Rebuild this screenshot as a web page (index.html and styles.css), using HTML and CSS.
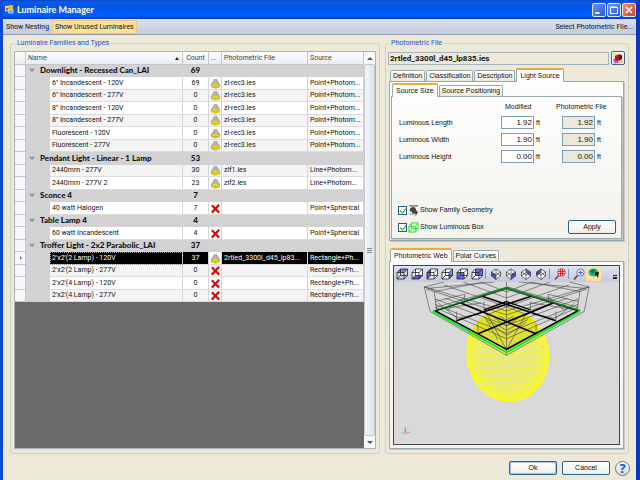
FILE: index.html
```
<!DOCTYPE html>
<html lang="en">
<head>
    <meta charset="UTF-8">
    <meta name="viewport" content="width=device-width, initial-scale=1.0">
    <title>Luminaire Manager</title>
    <link rel="stylesheet" href="styles.css">
</head>
<body>
    <!-- shared shapes -->
    <svg class="defs" width="0" height="0">
        <symbol id="cube" viewBox="0 0 12 12">
            <path d="M1 4.5h7v6.500h-7zM4.500 1h7v6.500h-7zM1 4.500l3.500-3.500M8 4.500l3.500-3.500M8 11l3.500-3.500M1 11l3.500-3.500" fill="none" stroke="#222" stroke-width=".8"/>
        </symbol>
        <symbol id="diamond" viewBox="0 0 12 12">
            <path d="M6 1l4.500 3v4l-4.500 3.500-4.500-3.500v-4zM1.500 4l4.500 3 4.500-3M6 7v4.500M6 1v3M1.500 8l4.500-3.500 4.500 3.500" fill="none" stroke="#333" stroke-width=".7"/>
        </symbol>
        <symbol id="web" viewBox="0 0 12 12">
            <path d="M5 1h2l4.500 7-1 2.500-4.500 1-4.500-1-1-2.500z" fill="#b4b4a8"/>
            <path d="M1.500 8.500l2.500-2.500 4 .5 3 2-1 2-4 1-4-1z" fill="#e3d51c"/>
            <path d="M5 1l-3.500 7M7 1l3.500 7M3 9l3 1 3-1" fill="none" stroke="#88887c" stroke-width=".5"/>
        </symbol>
        <symbol id="cross" viewBox="0 0 12 12">
            <path d="M2 2.500l8 8M10 2l-8 8.500" stroke="#c8100c" stroke-width="2.400"/>
        </symbol>
        <symbol id="chevron" viewBox="0 0 6 6">
            <path d="M1 1.500l2 2.500 2-2.500" fill="none" stroke="#777" stroke-width="1.200"/>
        </symbol>
    </svg>

    <header class="titlebar">
        <svg class="app-icon" viewBox="0 0 10 10">
            <path d="M0 1h6v6h-6z" fill="#e8ecf5"/>
            <path d="M4 0h5v5h-5z" fill="#f2b21c"/>
            <path d="M1 3h3v3h-3z" fill="#d8452a"/>
            <path d="M4 5h5v4h-5z" fill="#7fa4e6" stroke="#fff" stroke-width=".6"/>
        </svg>
        <h1>Luminaire Manager</h1>
        <button class="win-btn" aria-label="Minimize"><svg viewBox="0 0 12 12"><path d="M2.500 9h4" stroke="#fff" stroke-width="2"/></svg></button>
        <button class="win-btn" aria-label="Maximize"><svg viewBox="0 0 12 12"><path d="M2.500 3.500h7v6h-7zM2.500 3h7" fill="none" stroke="#fff"/></svg></button>
        <button class="win-btn close" aria-label="Close"><svg viewBox="0 0 12 12"><path d="M3 3l6 6M9 3l-6 6" stroke="#fff" stroke-width="1.500"/></svg></button>
    </header>

    <nav class="menubar">
        <button class="menu-btn">Show Nesting</button>
        <button class="menu-btn pressed">Show Unused Luminaires</button>
        <button class="menu-btn right">Select Photometric File...</button>
    </nav>

    <main>
        <fieldset class="group families">
            <legend>Luminaire Families and Types</legend>
            <div class="grid-view">
                <div class="grid-body">
                    <table>
                        <colgroup>
                            <col class="c-head"><col class="c-indent"><col><col class="c-count"><col class="c-icon"><col class="c-file"><col class="c-source">
                        </colgroup>
                        <thead>
                            <tr>
                                <th></th>
                                <th colspan="2">Name <span class="sort"></span></th>
                                <th class="num">Count</th>
                                <th>...</th>
                                <th>Photometric File</th>
                                <th>Source</th>
                            </tr>
                        </thead>
                        <tbody>
                            <tr class="family"><th></th><td colspan="2"><svg class="chev"><use href="#chevron"/></svg>Downlight - Recessed Can_LAI</td><td class="num">69</td><td colspan="3"></td></tr>
                            <tr><th></th><td class="indent"></td><td>6" Incandescent - 120V</td><td class="num">69</td><td class="ico"><svg><use href="#web"/></svg></td><td>zl-rec3.ies</td><td>Point+Photom...</td></tr>
                            <tr><th></th><td class="indent"></td><td>6" Incandescent - 277V</td><td class="num">0</td><td class="ico"><svg><use href="#web"/></svg></td><td>zl-rec3.ies</td><td>Point+Photom...</td></tr>
                            <tr><th></th><td class="indent"></td><td>8" Incandescent - 120V</td><td class="num">0</td><td class="ico"><svg><use href="#web"/></svg></td><td>zl-rec3.ies</td><td>Point+Photom...</td></tr>
                            <tr><th></th><td class="indent"></td><td>8" Incandescent - 277V</td><td class="num">0</td><td class="ico"><svg><use href="#web"/></svg></td><td>zl-rec3.ies</td><td>Point+Photom...</td></tr>
                            <tr><th></th><td class="indent"></td><td>Fluorescent - 120V</td><td class="num">0</td><td class="ico"><svg><use href="#web"/></svg></td><td>zl-rec3.ies</td><td>Point+Photom...</td></tr>
                            <tr><th></th><td class="indent"></td><td>Fluorescent - 277V</td><td class="num">0</td><td class="ico"><svg><use href="#web"/></svg></td><td>zl-rec3.ies</td><td>Point+Photom...</td></tr>
                            <tr class="family"><th></th><td colspan="2"><svg class="chev"><use href="#chevron"/></svg>Pendant Light - Linear - 1 Lamp</td><td class="num">53</td><td colspan="3"></td></tr>
                            <tr><th></th><td class="indent"></td><td>2440mm - 277V</td><td class="num">30</td><td class="ico"><svg><use href="#web"/></svg></td><td>zlf1.ies</td><td>Line+Photom...</td></tr>
                            <tr><th></th><td class="indent"></td><td>2440mm - 277V 2</td><td class="num">23</td><td class="ico"><svg><use href="#web"/></svg></td><td>zlf2.ies</td><td>Line+Photom...</td></tr>
                            <tr class="family"><th></th><td colspan="2"><svg class="chev"><use href="#chevron"/></svg>Sconce 4</td><td class="num">7</td><td colspan="3"></td></tr>
                            <tr><th></th><td class="indent"></td><td>40 watt Halogen</td><td class="num">7</td><td class="ico"><svg><use href="#cross"/></svg></td><td></td><td>Point+Spherical</td></tr>
                            <tr class="family"><th></th><td colspan="2"><svg class="chev"><use href="#chevron"/></svg>Table Lamp 4</td><td class="num">4</td><td colspan="3"></td></tr>
                            <tr><th></th><td class="indent"></td><td>60 watt Incandescent</td><td class="num">4</td><td class="ico"><svg><use href="#cross"/></svg></td><td></td><td>Point+Spherical</td></tr>
                            <tr class="family"><th></th><td colspan="2"><svg class="chev"><use href="#chevron"/></svg>Troffer Light - 2x2 Parabolic_LAI</td><td class="num">37</td><td colspan="3"></td></tr>
                            <tr class="selected"><th><svg class="marker" viewBox="0 0 4 6"><path d="M1 1l2 2-2 2z" fill="#777"/></svg></th><td class="indent"></td><td class="focus">2'x2'(2 Lamp) - 120V</td><td class="num">37</td><td class="ico"><svg><use href="#web"/></svg></td><td>2rtled_3300l_d45_lp83...</td><td>Rectangle+Ph...</td></tr>
                            <tr><th></th><td class="indent"></td><td>2'x2'(2 Lamp) - 277V</td><td class="num">0</td><td class="ico"><svg><use href="#cross"/></svg></td><td></td><td>Rectangle+Ph...</td></tr>
                            <tr><th></th><td class="indent"></td><td>2'x2'(4 Lamp) - 120V</td><td class="num">0</td><td class="ico"><svg><use href="#cross"/></svg></td><td></td><td>Rectangle+Ph...</td></tr>
                            <tr><th></th><td class="indent"></td><td>2'x2'(4 Lamp) - 277V</td><td class="num">0</td><td class="ico"><svg><use href="#cross"/></svg></td><td></td><td>Rectangle+Ph...</td></tr>
                        </tbody>
                    </table>
                </div>
                <div class="scrollbar">
                    <button class="scroll-btn" aria-label="Scroll up"><span class="up"></span></button>
                    <div class="thumb"><span class="grip"></span></div>
                    <button class="scroll-btn" aria-label="Scroll down"><span class="down"></span></button>
                </div>
            </div>
        </fieldset>

        <fieldset class="group photometric">
            <legend>Photometric File</legend>
            <div class="file-row">
                <input class="file-name" type="text" value="2rtled_3300l_d45_lp835.ies" aria-label="Photometric file" readonly>
                <button class="book-btn" aria-label="Open library">
                    <svg viewBox="0 0 12 12">
                        <path d="M1 1h4v4h-4z" fill="#f2dd8a"/>
                        <path d="M1 7l4-1 2 5-5 .5z" fill="#d34fc0"/>
                        <path d="M3 4l4-2 3 1v4l-4 2-3-1z" fill="#b3161b"/>
                        <path d="M7 4l3-1v4l-3 2z" fill="#6d0c10"/>
                        <path d="M7 10l4-2v2l-2 1.500z" fill="#e0c22e"/>
                    </svg>
                </button>
            </div>

            <div class="tabs" role="tablist">
                <button class="tab" role="tab">Definition</button>
                <button class="tab" role="tab">Classification</button>
                <button class="tab" role="tab">Description</button>
                <button class="tab active" role="tab" aria-selected="true">Light Source</button>
            </div>
            <div class="tab-page light-source">
                <div class="tabs inner" role="tablist">
                    <button class="tab active" role="tab" aria-selected="true">Source Size</button>
                    <button class="tab" role="tab">Source Positioning</button>
                </div>
                <div class="tab-page size-page">
                    <div class="size-form">
                        <span></span><span class="col-head">Modified</span><span class="col-head">Photometric File</span>
                        <label for="len">Luminous Length</label>
                        <span class="value"><input id="len" type="text" value="1.92"> ft</span>
                        <span class="value"><input type="text" value="1.92" aria-label="File length" readonly> ft</span>
                        <label for="wid">Luminous Width</label>
                        <span class="value"><input id="wid" type="text" value="1.90"> ft</span>
                        <span class="value"><input type="text" value="1.90" aria-label="File width" readonly> ft</span>
                        <label for="hei">Luminous Height</label>
                        <span class="value"><input id="hei" type="text" value="0.00"> ft</span>
                        <span class="value"><input type="text" value="0.00" aria-label="File height" readonly> ft</span>
                    </div>
                    <div class="options">
                        <div class="checks">
                            <label><input type="checkbox" checked>
                                <svg viewBox="0 0 12 12"><path d="M1 1h10" stroke="#333"/><path d="M2 4l3-2 3 1 1 3 2 2-2 3-2-2-2 1-1-3-2 0z" fill="#444"/><path d="M1 9l4 2M6 10l3 1.500" stroke="#999"/></svg>
                                Show Family Geometry</label>
                            <label><input type="checkbox" checked>
                                <svg viewBox="0 0 12 12"><path d="M1 5h7v6h-7zM4 1h7v6h-7zM1 5l3-4M8 5l3-4M8 11l3-4M1 11l3-4" fill="none" stroke="#1fe02a"/></svg>
                                Show Luminous Box</label>
                        </div>
                        <button class="btn">Apply</button>
                    </div>
                </div>
            </div>

            <div class="tabs second" role="tablist">
                <button class="tab active" role="tab" aria-selected="true">Photometric Web</button>
                <button class="tab" role="tab">Polar Curves</button>
            </div>
            <div class="tab-page web-page">
                <div class="viewer">
                    <div class="view-tools">
                        <button aria-label="Top"><svg viewBox="0 0 12 12"><path d="M1 4.500l3.500-3.500h7l-3.500 3.500z" fill="#7f7fe8"/><use href="#cube"/></svg></button>
                        <button aria-label="Bottom"><svg viewBox="0 0 12 12"><path d="M1 4.500l3.500-3.500h7v6.500h-10.500z" fill="#fff"/><path d="M1 11l3.500-3.500h7l-3.500 3.500z" fill="#5c5ce0"/><use href="#cube"/></svg></button>
                        <button aria-label="Left"><svg viewBox="0 0 12 12"><path d="M4.500 1h7v6.500l-3.500 3.500h-3.500z" fill="#fff"/><path d="M1 4.500l3.500-3.500v6.500l-3.500 3.500z" fill="#5c5ce0"/><use href="#cube"/></svg></button>
                        <button aria-label="Right"><svg viewBox="0 0 12 12"><path d="M1 4.500l3.500-3.500h7l-3.500 10h-7z" fill="#fff"/><path d="M8 4.500l3.500-3.500v6.500l-3.500 3.500z" fill="#7f7fe8"/><use href="#cube"/></svg></button>
                        <button aria-label="Front"><svg viewBox="0 0 12 12"><path d="M1 4.500l3.500-3.500h7v6.500l-3.500 3.500h-7z" fill="#fff"/><path d="M1 4.500h7v6.500h-7z" fill="#6c6ce4"/><use href="#cube"/></svg></button>
                        <button aria-label="Back"><svg viewBox="0 0 12 12"><path d="M1 4.500l3.500-3.500h7v6.500l-3.500 3.500h-7z" fill="#fff"/><path d="M4.500 1h7v6.500h-7z" fill="#6c6ce4"/><use href="#cube"/></svg></button>
                        <span class="sep"></span>
                        <button aria-label="South west"><svg viewBox="0 0 12 12"><path d="M6 1l4.500 3v4l-4.500 3.500-4.500-3.500v-4z" fill="#fff"/><path d="M1.500 4l4.500 3v4.500l-4.500-3.500z" fill="#4a4ae0"/><use href="#diamond"/></svg></button>
                        <button aria-label="South east"><svg viewBox="0 0 12 12"><path d="M6 1l4.500 3v4l-4.500 3.500-4.500-3.500v-4z" fill="#fff"/><path d="M6 7l4.500-3v4l-4.500 3.500z" fill="#4a4ae0"/><use href="#diamond"/></svg></button>
                        <button aria-label="North east"><svg viewBox="0 0 12 12"><path d="M6 1l4.500 3v4l-4.500 3.500-4.500-3.500v-4z" fill="#fff"/><path d="M6 1l4.500 3v4l-4.500-3.500z" fill="#5c5ce0"/><use href="#diamond"/></svg></button>
                        <button aria-label="North west"><svg viewBox="0 0 12 12"><path d="M6 1l4.500 3v4l-4.500 3.500-4.500-3.500v-4z" fill="#fff"/><path d="M1.500 4l4.500-3v3.500l-4.500 3.500z" fill="#4a4ae0"/><use href="#diamond"/></svg></button>
                        <span class="sep"></span>
                        <button aria-label="Zoom extents"><svg viewBox="0 0 12 12"><path d="M1 11.500l4-4.500" stroke="#7a4a3a" stroke-width="1.500"/><circle cx="7.500" cy="4.500" r="3.800" fill="#fff" stroke="#a55"/><path d="M6.500 1v7M8.500 1v7M4 3.500h7M4 5.500h7" stroke="#e02020" stroke-width="1.200"/></svg></button>
                        <span class="sep"></span>
                        <button aria-label="Zoom"><svg viewBox="0 0 12 12"><path d="M1 11.500l3.500-4" stroke="#554" stroke-width="1.800"/><circle cx="7.500" cy="4.500" r="3.600" fill="#eef2ff" stroke="#779"/><path d="M7.500 2.500v4M5.500 4.500h4" stroke="#3a50e8"/></svg></button>
                        <button class="on" aria-label="Orbit"><svg viewBox="0 0 12 12"><ellipse cx="5.500" cy="4.500" rx="5" ry="4" fill="#18b898"/><path d="M1.500 3l4-2 2 2-3 3z" fill="#0b7a54"/><path d="M7 4l4 0-1 6-1.500-2.500-2 0z" fill="#222"/></svg></button>
                        <span class="more"></span>
                    </div>
                    <svg class="scene" viewBox="27 21 678 489">
                        <defs>
                            <pattern id="mesh" width="11" height="8" patternUnits="userSpaceOnUse" patternTransform="rotate(9)">
                                <path d="M0 1l11 5M0 6l11-5" stroke="#ff0" stroke-width="1.700" fill="none"/>
                            </pattern>
                            <radialGradient id="rim">
                                <stop offset=".65" stop-color="#ff0" stop-opacity=".12"/>
                                <stop offset="1" stop-color="#ff0" stop-opacity=".6"/>
                            </radialGradient>
                        </defs>
                        <!-- photometric solid -->
                        <g transform="rotate(-8 370 241)">
                            <ellipse cx="370" cy="241" rx="122" ry="139" fill="url(#rim)"/>
                            <ellipse cx="370" cy="241" rx="122" ry="139" fill="url(#mesh)" stroke="#ff0" stroke-width="4"/>
                        </g>
                        <path d="M264 165C285 118 325 103 365 103s85 18 100 64l-99 58z" fill="#d2d200" fill-opacity=".5"/>
                        <!-- housing -->
                        <g fill="none" stroke="#444" stroke-width="1.800">
                            <path d="M118 36l18 74 230 132 234-132 15-74M118 36l60-15M615 36l-60-15M118 36l30 8M615 36l-30 8M148 50l8 58M588 48l-10 60"/>
                            <path d="M118 36l248 72 249-72M124 42l242 78 243-78M366 21v220M148 50l150-29M588 50l-150-29M130 40L330 21M602 40L402 21"/>
                            <path d="M150 72l216 80 216-80M150 88l216 88 216-88M152 98l214 94 214-94M150 80l90-22M582 80l-90-22M150 98l220-62 212 62"/>
                            <path d="M178 30l188 66 188-66M235 21l131 48 131-48M290 21l76 30 76-30M298 80v28M438 80v28M240 58v28M492 58v28M215 110v26M515 110v26M280 145v32M455 145v32"/>
                            <path d="M308 120l58-24 64 24M308 134l58 32 64-32M314 142l52 40 60-40M330 130l36 24 36-24M345 124l21 12 21-12M340 195l-40-70M366 225l-60-110M366 225l60-110"/>
                            <path d="M190 105l50-40M540 105l-50-40M160 104l130-20M570 104l-130-20M225 128l60-10M505 128l-60-10M180 70l110 36M550 70l-110 36M160 84l60 48M572 84l-60 48"/>
                        </g>
                        <path d="M145 110L366 38l222 70" fill="none" stroke="#0a8a12" stroke-width="5"/>
                        <path d="M143 109l223 124 222-124" fill="none" stroke="#10ee1c" stroke-width="6"/>
                        <g fill="none" stroke="#050505">
                            <path d="M152 108l214 116 214-116" stroke-width="5"/>
                            <path d="M152 108l214-66 214 66" stroke-width="2"/>
                            <path d="M215 138l225-74M280 177l225-92M515 138l-222-74M455 177l-225-92" stroke-width="5"/>
                            <path d="M298 105l68-25 72 25" stroke-width="4"/>
                        </g>
                        <path d="M61 474v-15" stroke="#7474e0" stroke-width="3"/>
                        <path d="M61 478l-12-4" stroke="#5fd86a" stroke-width="3"/>
                        <path d="M61 478l13-5" stroke="#e07a7a" stroke-width="3"/>
                    </svg>
                </div>
            </div>
        </fieldset>
    </main>

    <footer>
        <button class="btn default">Ok</button>
        <button class="btn">Cancel</button>
        <button class="help" aria-label="Help">?</button>
    </footer>
</body>
</html>
```
FILE: styles.css
```
* {
    box-sizing: border-box;
}
body {
    margin: 0;
    min-height: 100vh;
    display: flex;
    flex-direction: column;
    background: #ece9d8;
    border-left: 3px solid #0a48d8;
    border-right: 4px solid #0838c0;
    font-family: Roboto, "Liberation Sans", sans-serif;
    font-size: 7px;
    line-height: 10px;
    color: #111;
}
button, input {
    font: inherit;
    color: inherit;
    margin: 0;
    padding: 0;
}
.defs {
    position: absolute;
}

/* title bar */
.titlebar {
    display: flex;
    align-items: center;
    gap: 1px;
    height: 19px;
    margin: 0 -4px 0 -3px;
    padding: 0 4px 0 5px;
    background: linear-gradient(#0a3fc0, #0a5cf0 2px, #0054e3 6px, #0060ff 15px, #0040c8);
}
.app-icon {
    width: 9px;
    height: 9px;
}
h1 {
    flex: 1;
    margin: 0 0 0 2px;
    font-family: Lato, sans-serif;
    font-size: 9px;
    font-weight: bold;
    color: #fff;
}
.win-btn {
    width: 14px;
    height: 14px;
    border: 1px solid #dfe8fb;
    border-radius: 2px;
    background: linear-gradient(135deg, #6f96f2, #2158dc);
}
.win-btn svg {
    display: block;
    width: 12px;
    height: 12px;
}
.win-btn.close {
    background: linear-gradient(135deg, #f09070, #d8401c);
}

/* menu */
.menubar {
    display: flex;
    align-items: center;
    height: 16px;
    background: linear-gradient(#dcdfec, #c5cbdd);
    border-bottom: 1px solid #8f99b0;
}
.menu-btn {
    height: 14px;
    padding: 0 2px;
    border: 1px solid transparent;
    background: none;
}
.menu-btn.pressed {
    background: #ffdf9b;
    border-color: #f0c878;
}
.menu-btn.right {
    margin-left: auto;
}

/* main area */
main {
    flex: 1;
    display: grid;
    grid-template-columns: 370fr 244fr;
    gap: 5px;
    padding: 3px 7px 0;
}
.group {
    display: flex;
    flex-direction: column;
    min-width: 0;
    margin: 0;
    padding: 3px 3px 4px;
    border: 1px solid #d2d0bd;
    border-radius: 3px;
}
.group legend {
    margin-left: 1px;
    padding: 0 2px;
    color: #1a50d0;
}
.photometric {
    padding-left: 2px;
}

/* luminaire grid */
.grid-view {
    flex: 1;
    display: flex;
    border: 1px solid #a8b0bc;
}
.grid-body {
    flex: 1;
    min-width: 0;
    background: #6a6a6a;
}
table {
    width: 100%;
    table-layout: fixed;
    border-collapse: separate;
    border-spacing: 0;
}
.c-head {
    width: 11px;
}
.c-indent {
    width: 24px;
}
.c-count {
    width: 26px;
}
.c-icon {
    width: 13px;
}
.c-file {
    width: 86px;
}
.c-source {
    width: 56px;
}
th, td {
    height: 12px;
    padding: 0 0 0 2px;
    border-right: 1px solid #d4d4d4;
    border-bottom: 1px solid #dcdcdc;
    background: #fff;
    line-height: 11px;
    text-align: left;
    white-space: nowrap;
    overflow: hidden;
}
tbody tr:nth-child(even) th, tbody tr:nth-child(even) td {
    height: 13px;
}
tbody tr:nth-child(odd) td {
    background: #f4f4f4;
}
th {
    font-weight: normal;
    background: #f6f7fa;
    border-color: #c3c6cc;
}
thead th {
    height: 13px;
    color: #444;
    background: linear-gradient(#fff, #e9ebf1);
}
.num {
    padding: 0;
    text-align: center;
}
.sort {
    float: right;
    margin: 4px 3px 0 0;
    border: 2px solid transparent;
    border-top: 0;
    border-bottom: 3px solid #222;
}
tbody tr.family:nth-child(n) td, tbody tr:nth-child(n) td.indent {
    background: #d2d2d2;
    border-color: #d2d2d2;
}
.family td {
    font-family: Lato, sans-serif;
    font-size: 8px;
    font-weight: 900;
}
.chev {
    width: 6px;
    height: 6px;
    margin: 0 5px 0 1px;
}
.ico {
    padding: 0;
    text-align: center;
}
.ico svg {
    display: block;
    width: 11px;
    height: 11px;
    margin: auto;
}
.marker {
    display: block;
    width: 4px;
    height: 6px;
    margin: 0 auto;
}
tbody tr.selected td:not(.indent):not(.ico) {
    background: #000;
    color: #fff;
}
tbody tr.selected .focus {
    outline: 1px dotted #999;
    outline-offset: -1px;
}
.scrollbar {
    display: flex;
    flex-direction: column;
    width: 11px;
    background: #eef0f4;
}
.scroll-btn {
    display: flex;
    align-items: center;
    justify-content: center;
    height: 12px;
    border: 0;
    background: #f8f9fb;
}
.up, .down {
    border: 3px solid transparent;
    border-top: 0;
    border-bottom-color: #555;
}
.down {
    border-top: 3px solid #555;
    border-bottom: 0;
}
.thumb {
    flex: 1;
    display: flex;
    align-items: center;
    justify-content: center;
    border: 1px solid #c4c8d0;
    border-radius: 2px;
    background: linear-gradient(90deg, #f5f6f8, #dfe2e8);
}
.grip {
    width: 5px;
    height: 5px;
    border-top: 1px solid #888;
    border-bottom: 1px solid #888;
    background: linear-gradient(#eee 1px, #888 1px, #888 2px, #eee 2px);
}

/* photometric file */
.file-row {
    display: flex;
    align-items: center;
    gap: 2px;
    height: 14px;
    margin-bottom: 3px;
}
.file-name {
    flex: 1;
    min-width: 0;
    height: 13px;
    padding: 0 1px;
    border: 1px solid #a3b3bd;
    background: #ece9d8;
    font-weight: bold;
    font-size: 8px;
}
.book-btn {
    width: 14px;
    height: 14px;
    border: 1px solid #3f6488;
    border-radius: 2px;
    background: #fbfaf5;
}
.book-btn svg {
    display: block;
    width: 12px;
    height: 12px;
}
.tabs {
    display: flex;
    align-items: flex-end;
    gap: 1px;
    height: 13px;
    padding-left: 2px;
    font-family: "Liberation Sans", Arial, sans-serif;
}
.tab {
    height: 11px;
    padding: 0 2px;
    border: 1px solid #98a8ac;
    border-bottom: 0;
    border-radius: 2px 2px 0 0;
    background: linear-gradient(#fff, #eceadf);
    white-space: nowrap;
}
.tab.active {
    height: 14px;
    margin-bottom: -1px;
    padding: 0 3px 1px;
    border-top: 2px solid #f2a83c;
    background: #fdfdfd;
    position: relative;
}
.tab-page {
    margin: 0 1px;
    padding: 1px;
    border: 1px solid #98a8ac;
    box-shadow: 1px 1px 0 #c9c7ba;
    background: linear-gradient(#fdfdfd, #f3f2ec);
}
.light-source {
    height: 160px;
    display: flex;
    flex-direction: column;
}
.tabs.inner {
    padding-left: 1px;
}
.size-page {
    flex: 1;
    display: flex;
    flex-direction: column;
    justify-content: space-between;
    margin: 0;
    padding: 5px 5px 4px 6px;
    font-family: "Liberation Sans", Arial, sans-serif;
}
.size-form {
    display: grid;
    grid-template-columns: 1fr 50px 60px;
    column-gap: 5px;
    row-gap: 4px;
    align-items: center;
}
.size-form label {
    padding-left: 1px;
}
.col-head {
    padding-left: 4px;
    white-space: nowrap;
}
.col-head:nth-child(3) {
    padding-left: 0;
}
.value {
    display: flex;
    align-items: center;
    gap: 2px;
}
.value:nth-child(3n) {
    padding-left: 6px;
}
.value input {
    width: 33px;
    height: 13px;
    padding-right: 1px;
    border: 1px solid #7f9db9;
    background: #fff;
    text-align: right;
    font-size: 8px;
}
.value input:read-only {
    background: #ece9d8;
}
.options {
    display: flex;
    align-items: flex-end;
    justify-content: space-between;
}
.checks {
    display: flex;
    flex-direction: column;
    gap: 5px;
    padding-bottom: 1px;
}
.checks label {
    display: flex;
    align-items: center;
    gap: 1px;
    height: 12px;
}
.checks svg {
    width: 11px;
    height: 11px;
}
.checks input {
    appearance: none;
    width: 9px;
    height: 9px;
    border: 1px solid #2c5a84;
    background: #fff;
}
.checks input:checked::before {
    content: "";
    display: block;
    width: 3px;
    height: 5px;
    margin: 0 auto;
    border: solid #21a121;
    border-width: 0 1px 1px 0;
    transform: rotate(40deg);
}
.btn {
    width: 48px;
    height: 14px;
    border: 1px solid #2d5f8c;
    border-radius: 2px;
    background: linear-gradient(#fff, #eeede5);
    font-family: "Liberation Sans", Arial, sans-serif;
}
.btn.default {
    box-shadow: inset 0 0 0 1px #a9c4f0;
}

/* 3D view */
.tabs.second {
    margin-top: 7px;
}
.web-page {
    flex: 1;
    display: flex;
    padding: 3px;
}
.viewer {
    flex: 1;
    min-width: 0;
    display: flex;
    flex-direction: column;
    border: 1px solid #444;
    background: #d9d9d9;
}
.view-tools {
    display: flex;
    align-items: center;
    height: 16px;
    background: linear-gradient(#dfe3ef, #c3cadf);
}
.view-tools button {
    display: flex;
    align-items: center;
    justify-content: center;
    width: 15px;
    height: 14px;
    border: 0;
    background: none;
}
.view-tools button.on {
    background: #ffe0a0;
}
.view-tools svg {
    width: 12px;
    height: 12px;
}
.sep {
    width: 1px;
    height: 10px;
    margin: 0 2px 0 1px;
    background: #8a93ab;
}
.more {
    margin: 6px 2px 0 auto;
    width: 4px;
    height: 4px;
    border-top: 1px solid #222;
    background: linear-gradient(transparent 1px, #222 1px);
}
.scene {
    display: block;
    width: 100%;
    flex: 1;
    min-height: 0;
}

/* dialog buttons */
footer {
    display: flex;
    align-items: center;
    justify-content: flex-end;
    gap: 5px;
    height: 26px;
    padding: 2px 6px 0;
}
.help {
    width: 15px;
    height: 15px;
    border: 1px solid #777;
    border-radius: 50%;
    background: linear-gradient(#fff, #d4d8e4);
    font-family: "Open Sans", sans-serif;
    font-size: 13px;
    font-weight: bold;
    line-height: 13px;
    color: #1648e0;
}
```
